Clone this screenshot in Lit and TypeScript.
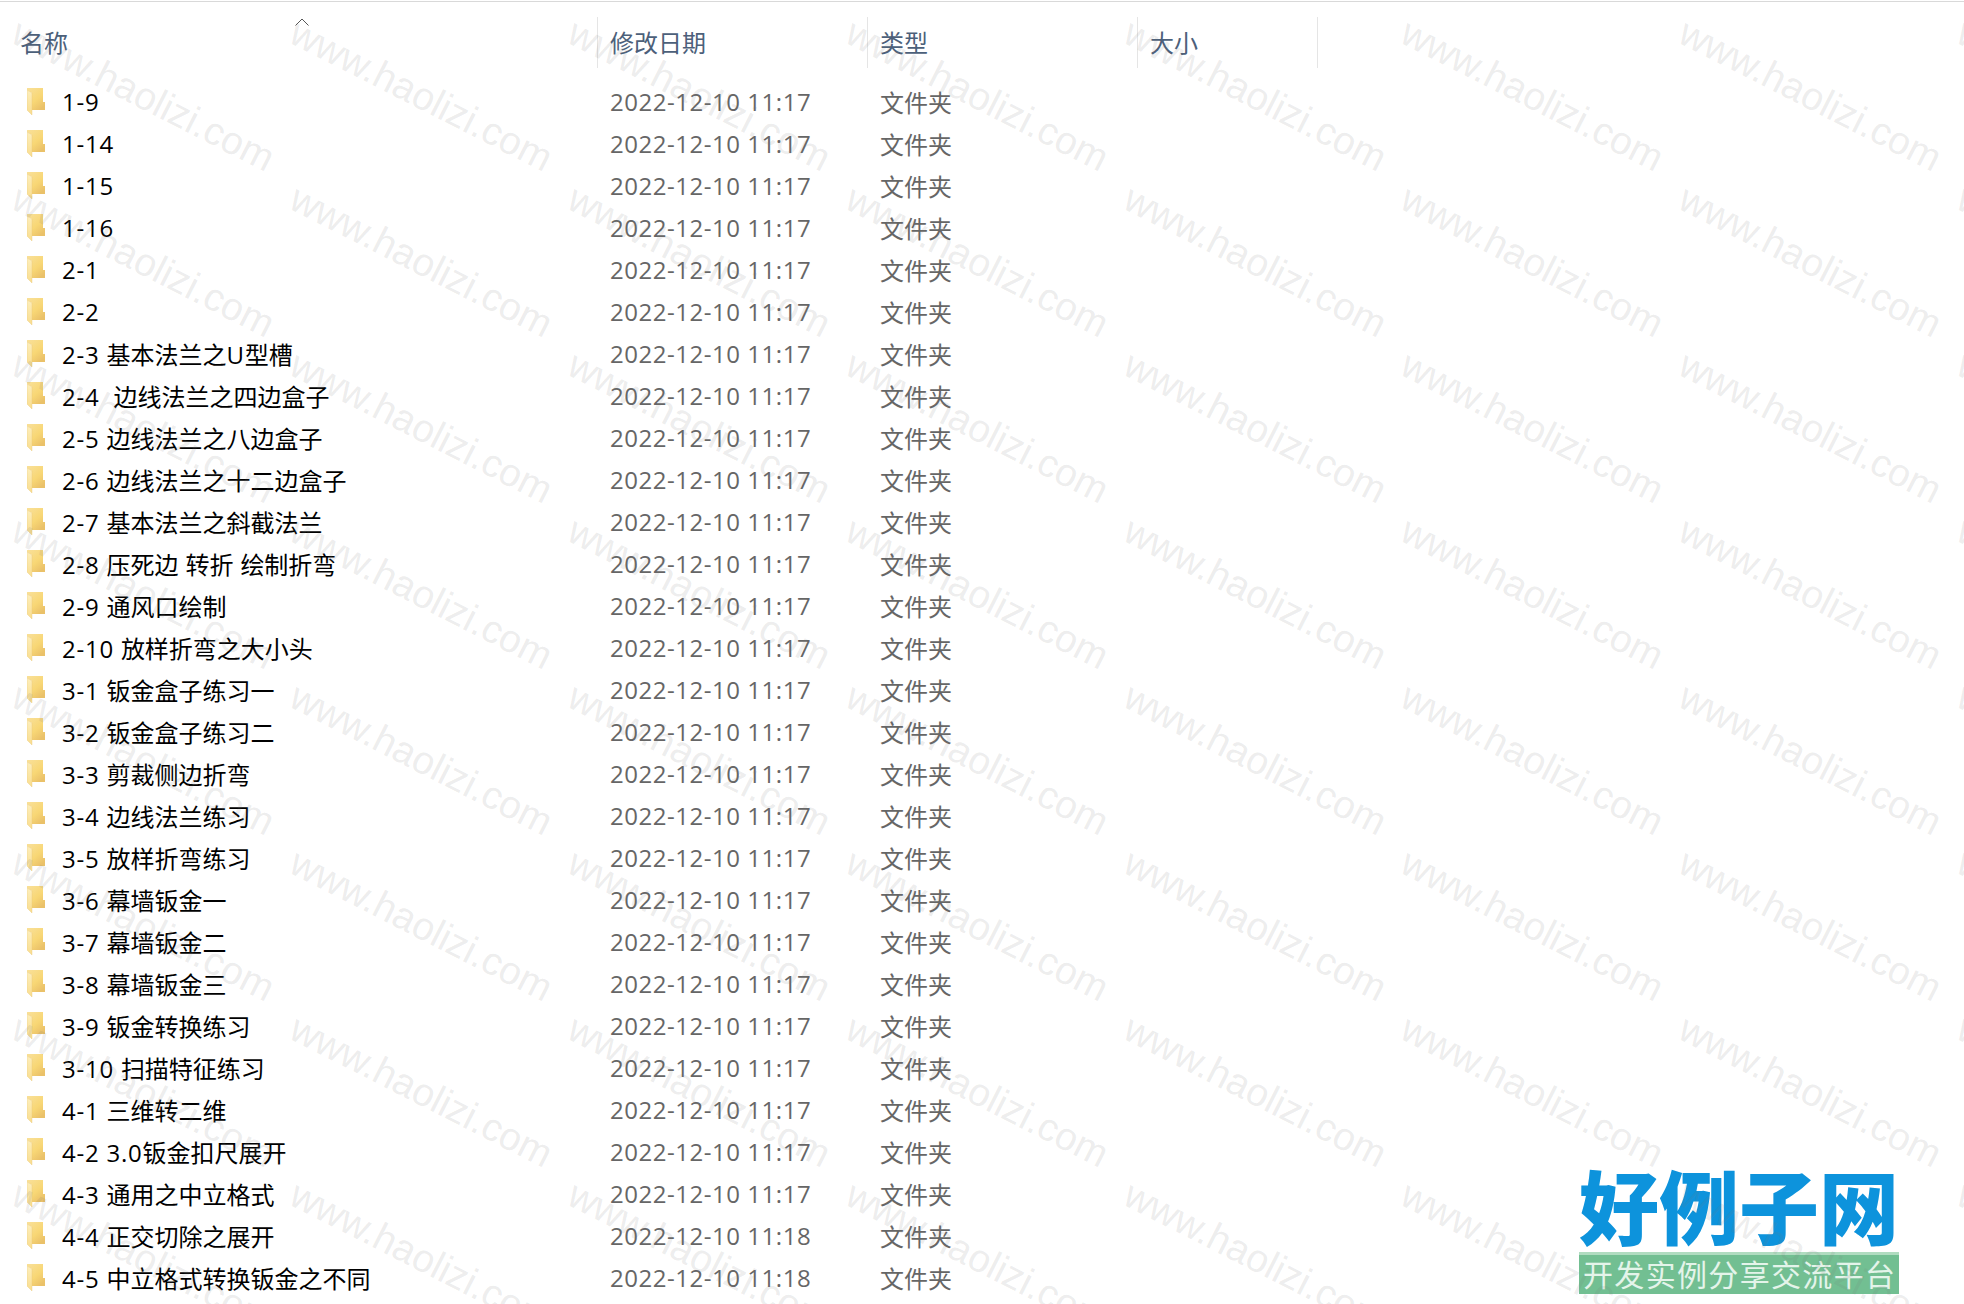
import { LitElement, html, css, svg } from "lit";
import { customElement } from "lit/decorators.js";

const T17 = "2022-12-10 11:17";
const T18 = "2022-12-10 11:18";
const ROWS: [string, string][] = [
  ["1-9", T17], ["1-14", T17], ["1-15", T17], ["1-16", T17], ["2-1", T17], ["2-2", T17],
  ["2-3 基本法兰之U型槽", T17], ["2-4  边线法兰之四边盒子", T17], ["2-5 边线法兰之八边盒子", T17],
  ["2-6 边线法兰之十二边盒子", T17], ["2-7 基本法兰之斜截法兰", T17], ["2-8 压死边 转折 绘制折弯", T17],
  ["2-9 通风口绘制", T17], ["2-10 放样折弯之大小头", T17], ["3-1 钣金盒子练习一", T17],
  ["3-2 钣金盒子练习二", T17], ["3-3 剪裁侧边折弯", T17], ["3-4 边线法兰练习", T17],
  ["3-5 放样折弯练习", T17], ["3-6 幕墙钣金一", T17], ["3-7 幕墙钣金二", T17], ["3-8 幕墙钣金三", T17],
  ["3-9 钣金转换练习", T17], ["3-10 扫描特征练习", T17], ["4-1 三维转二维", T17], ["4-2 3.0钣金扣尺展开", T17],
  ["4-3 通用之中立格式", T17], ["4-4 正交切除之展开", T18], ["4-5 中立格式转换钣金之不同", T18],
];

const folder = svg`<svg class="folder" viewBox="0 0 18 27" width="18" height="27" aria-hidden="true">
  <defs>
    <linearGradient id="fb" x1="0" y1="0" x2="0.7" y2="1">
      <stop offset="0" stop-color="#f9e09a"/><stop offset="0.6" stop-color="#f8d775"/><stop offset="1" stop-color="#eac169"/>
    </linearGradient>
    <linearGradient id="ff" x1="0" y1="0" x2="0" y2="1">
      <stop offset="0" stop-color="#fdeebb"/><stop offset="1" stop-color="#f9dd8e"/>
    </linearGradient>
  </defs>
  <path d="M0 0H16V14H18V22H5V5L0 2Z" fill="url(#fb)"/>
  <path d="M0 2L5 5V27L0 22Z" fill="url(#ff)" stroke="#e8c878" stroke-width="0.4"/>
</svg>`;

const latinSplit = (n: string) =>
  n.split(/([\x20-\x7e]+)/).map((p, i) => (i % 2 ? html`<span class="latin">${p}</span>` : p));

@customElement("app-root")
export class AppRoot extends LitElement {
  static styles = css`
    :host {
      display: block;
      position: relative;
      width: 1964px;
      height: 1304px;
      overflow: hidden;
      background: #fff;
      font-family: "Open Sans", "Noto Sans CJK SC", sans-serif;
      font-size: 24px;
    }
    .topline { height: 1px; margin-top: 1px; background: #d9d9d9; }
    .grid {
      display: grid;
      grid-template-columns: 597px 270px 270px 181px;
    }
    .header {
      height: 51px;
      margin-top: 15px;
      color: #4c607a;
    }
    .hcell {
      position: relative;
      display: flex;
      align-items: center;
      padding-left: 12px;
      border-left: 1px solid #e5e5e5;
      line-height: 1;
    }
    .hcell.first { padding-left: 20px; border-left: none; }
    .hcell.last { border-right: 1px solid #e5e5e5; }
    .chevron { position: absolute; left: 295px; top: 1px; }
    .rows { margin-top: 12px; }
    .row { height: 42px; align-items: center; }
    .name {
      display: flex;
      align-items: center;
      gap: 17px;
      padding-left: 27px;
      color: #000;
      white-space: pre;
    }
    .latin { letter-spacing: 0.75px; }
    .folder { flex: none; }
    .date, .type { padding-left: 13px; color: #666; }
    .date { letter-spacing: 0.53px; }
    .watermarks {
      position: absolute;
      inset: 0;
      display: grid;
      grid-template-columns: repeat(8, 277.9px);
      grid-auto-rows: 166px;
      pointer-events: none;
      overflow: hidden;
    }
    .wm {
      display: block;
      width: 0;
      height: 0;
      transform: translate(24px, 12px) rotate(27deg);
      transform-origin: 0 0;
      font-family: "Liberation Sans", sans-serif;
      font-size: 39px;
      line-height: 1;
      white-space: nowrap;
      color: rgba(120, 120, 120, 0.14);
    }
    .logo {
      position: absolute;
      left: 1579px;
      top: 1158px;
      width: 320px;
      font-family: "Noto Sans CJK SC", sans-serif;
    }
    .logo-top {
      display: flex;
      justify-content: space-between;
      height: 94px;
      font-size: 80px;
      font-weight: 900;
      line-height: 90px;
      color: #0d93dc;
    }
    .logo-bar {
      height: 42px;
      background: #72bf92;
      border-top: 3px solid #b0dcc0;
      box-sizing: border-box;
      display: flex;
      justify-content: space-between;
      align-items: center;
      padding: 0 4px 4px;
      font-size: 30px;
      line-height: 1;
      color: #e4f4ea;
    }
  `;

  render() {
    const wm = Array.from({ length: 64 }, () => html`<div><span class="wm">www.haolizi.com</span></div>`);
    return html`
      <div class="topline"></div>
      <div class="grid header">
        <div class="hcell first">名称
          <svg class="chevron" width="14" height="8" viewBox="0 0 14 8" aria-hidden="true"><path d="M0.5 7.5L7 1L13.5 7.5" fill="none" stroke="#555" stroke-width="1"/></svg>
        </div>
        <div class="hcell">修改日期</div>
        <div class="hcell">类型</div>
        <div class="hcell last">大小</div>
      </div>
      <div class="rows">
        ${ROWS.map(([n, d]) => html`
          <div class="grid row">
            <div class="name">${folder}<span>${latinSplit(n)}</span></div>
            <div class="date">${d}</div>
            <div class="type">文件夹</div>
          </div>`)}
      </div>
      <div class="logo">
        <div class="logo-top"><span>好</span><span>例</span><span>子</span><span>网</span></div>
        <div class="logo-bar">${[..."开发实例分享交流平台"].map((c) => html`<span>${c}</span>`)}</div>
      </div>
      <div class="watermarks">${wm}</div>
    `;
  }
}
